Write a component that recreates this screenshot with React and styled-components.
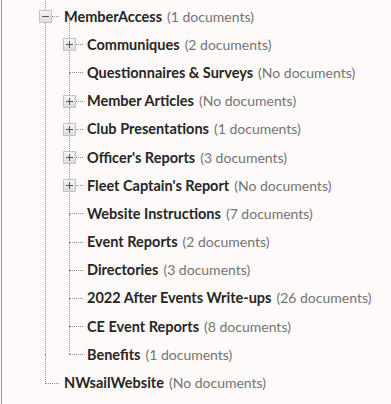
import React from "react";
import styled, { createGlobalStyle } from "styled-components";

const Global = createGlobalStyle`
  html, body { margin: 0; padding: 0; background: #fdfaf9; }
  body { font-family: "Lato", "Open Sans", sans-serif; }
`;

const Panel = styled.div`
  width: 391px;
  height: 404px;
  box-sizing: border-box;
  border-left: 1px solid #9a9a9a;
  margin-left: 1px;
  background: #fdfaf9;
  overflow: hidden;
  padding-top: 2px;
`;

const List = styled.ul`
  list-style: none;
  margin: 0;
  padding: 0 0 0 ${(p) => p.$indent}px;
`;

const Item = styled.li`
  position: relative;
  &::before {
    content: "";
    position: absolute;
    left: ${(p) => p.$line}px;
    top: -14px;
    height: ${(p) => (p.$last ? "28px" : "100%")};
    border-left: 1px dotted #8c8c8c;
  }
`;

const Row = styled.div`
  position: relative;
  height: 28.2px;
  display: flex;
  align-items: center;
  padding-left: ${(p) => p.$text}px;
  white-space: nowrap;
  &::after {
    content: "";
    position: absolute;
    left: ${(p) => p.$line}px;
    width: ${(p) => p.$arm}px;
    top: 50%;
    border-top: 1px dotted #8c8c8c;
  }
`;

const Expander = styled.span`
  position: absolute;
  z-index: 1;
  left: ${(p) => p.$line - 6}px;
  top: 50%;
  margin-top: -6px;
  width: 11px;
  height: 11px;
  border: 1px solid #c4c4c4;
  background: linear-gradient(#f4f4f4, #dcdcdc);
  display: flex;
  align-items: center;
  justify-content: center;
  svg { display: block; }
`;

const Name = styled.span`
  font-weight: 700;
  font-size: 14.5px;
  color: #262626;
`;

const Count = styled.span`
  font-size: 14px;
  color: #747474;
  margin-left: 5px;
`;

const Sign = ({ open }) => (
  <svg width="7" height="7" viewBox="0 0 7 7">
    <rect x="0" y="3" width="7" height="1" fill="#555" />
    {!open && <rect x="3" y="0" width="1" height="7" fill="#555" />}
  </svg>
);

const children = [
  ["Communiques", "(2 documents)", true],
  ["Questionnaires & Surveys", "(No documents)", false],
  ["Member Articles", "(No documents)", true],
  ["Club Presentations", "(1 documents)", true],
  ["Officer's Reports", "(3 documents)", true],
  ["Fleet Captain's Report", "(No documents)", true],
  ["Website Instructions", "(7 documents)", false],
  ["Event Reports", "(2 documents)", false],
  ["Directories", "(3 documents)", false],
  ["2022 After Events Write-ups", "(26 documents)", false],
  ["CE Event Reports", "(8 documents)", false],
  ["Benefits", "(1 documents)", false],
];

export default function App() {
  return (
    <>
      <Global />
      <Panel>
        <List $indent={0}>
          <Item $line={43}>
            <Row $line={43} $arm={14} $text={62}>
              <Expander $line={43}><Sign open /></Expander>
              <Name>MemberAccess</Name>
              <Count>(1 documents)</Count>
            </Row>
            <List $indent={23}>
              {children.map(([n, c, exp], i) => (
                <Item key={n} $line={44} $last={i === children.length - 1}>
                  <Row $line={44} $arm={14} $text={62}>
                    {exp && <Expander $line={44}><Sign /></Expander>}
                    <Name>{n}</Name>
                    <Count>{c}</Count>
                  </Row>
                </Item>
              ))}
            </List>
          </Item>
          <Item $line={43} $last>
            <Row $line={43} $arm={14} $text={62}>
              <Name>NWsailWebsite</Name>
              <Count>(No documents)</Count>
            </Row>
          </Item>
        </List>
      </Panel>
    </>
  );
}
